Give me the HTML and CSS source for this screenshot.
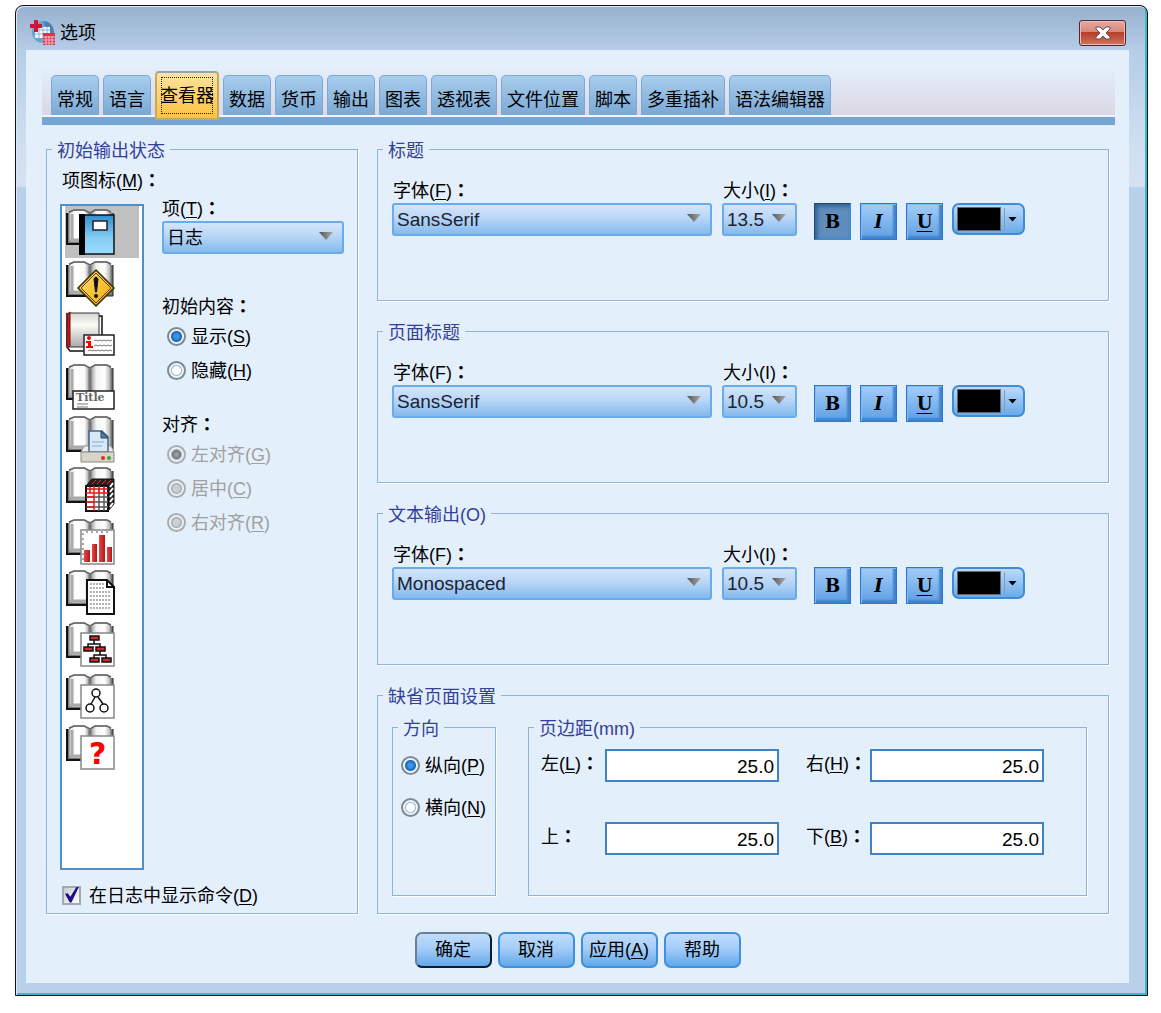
FILE: index.html
```html
<!DOCTYPE html>
<html lang="zh-CN">
<head>
<meta charset="UTF-8">
<title>选项</title>
<link rel="stylesheet" href="styles.css">
</head>
<body>
	<svg class="defs" aria-hidden="true">
		<defs>
			<linearGradient id="pageGrad">
				<stop offset="0" stop-color="#d8d8d8" />
				<stop offset="0.3" stop-color="#ffffff" />
				<stop offset="0.75" stop-color="#fafafa" />
				<stop offset="1" stop-color="#8c8c8c" />
			</linearGradient>
			<linearGradient id="pageGradRight">
				<stop offset="0" stop-color="#8c8c8c" />
				<stop offset="0.3" stop-color="#f4f4f4" />
				<stop offset="0.7" stop-color="#ffffff" />
				<stop offset="1" stop-color="#a8a8a8" />
			</linearGradient>
			<linearGradient id="blueGrad" x2="0" y2="1">
				<stop offset="0" stop-color="#2f8fd0" />
				<stop offset="0.6" stop-color="#86cdf4" />
				<stop offset="1" stop-color="#9adcff" />
			</linearGradient>
			<linearGradient id="signGrad" x2="1" y2="1">
				<stop offset="0" stop-color="#ffe07a" />
				<stop offset="1" stop-color="#eda800" />
			</linearGradient>
			<linearGradient id="coverGrad" x2="0" y2="1">
				<stop offset="0" stop-color="#d6d6d2" />
				<stop offset="0.35" stop-color="#fbfbf5" />
				<stop offset="1" stop-color="#a9a9a9" />
			</linearGradient>
			<linearGradient id="barGrad">
				<stop offset="0" stop-color="#e24a4a" />
				<stop offset="1" stop-color="#b81414" />
			</linearGradient>
			<symbol id="book" viewBox="0 0 50 52">
				<path d="M2 7V38H48V7" fill="#777" stroke="#222" stroke-width="1" />
				<path d="M2 7V38H22" fill="none" stroke="#111" stroke-width="2" />
				<path d="M4 7L9 4H20L25 7V36H4Z" fill="url(#pageGrad)" stroke="#777" />
				<path d="M25 7L30 4H42L46 7V36H25Z" fill="url(#pageGradRight)" stroke="#777" />
				<path d="M4 6L9 4H19L25 7L30 4H42L46 6" fill="none" stroke="#666" stroke-width="1.5" />
				<path d="M7 8V35M5 34H24" stroke="#aaa" stroke-width="3" />
				<path d="M25 8V35" stroke="#777" stroke-width="3" />
			</symbol>
		</defs>
	</svg>

	<div class="dialog">
		<header class="titleBar">
			<svg class="appIcon" viewBox="0 0 25 25" aria-hidden="true">
				<circle cx="13" cy="12" r="11" fill="#6ba2d2" />
				<path d="M13 1a11 11 0 0 1 9 17L17 10Z" fill="#4682bb" />
				<path d="M5 7H20V18H5Z" fill="#f3f8fd" />
				<path d="M5 10H20M5 14H20M9 7V18M13 7V18M17 7V18" stroke="#8db4d9" />
				<path d="M4 0H8V4H12V8H8V12H4V8H0V4H4Z" fill="#cf1735" />
				<path d="M13 13H25V25H13Z" fill="#d3364f" />
				<path d="M13 17H25M13 20H25M13 23H25M16 16V25M19 16V25M22 16V25" stroke="#f0b7c0" />
			</svg>
			<h1>选项</h1>
			<button type="button" class="closeButton" aria-label="关闭">
				<svg viewBox="0 0 18 14" aria-hidden="true">
					<path d="M2 1H6L9 4L12 1H16V3L12 7L16 11V13H12L9 10L6 13H2V11L6 7L2 3Z" fill="#fff" stroke="#6b4f58" />
				</svg>
			</button>
		</header>

		<main class="panel">
			<div class="tabs" role="tablist">
				<button type="button" role="tab">常规</button>
				<button type="button" role="tab">语言</button>
				<button type="button" role="tab" class="active" aria-selected="true">查看器</button>
				<button type="button" role="tab">数据</button>
				<button type="button" role="tab">货币</button>
				<button type="button" role="tab">输出</button>
				<button type="button" role="tab">图表</button>
				<button type="button" role="tab">透视表</button>
				<button type="button" role="tab">文件位置</button>
				<button type="button" role="tab">脚本</button>
				<button type="button" role="tab">多重插补</button>
				<button type="button" role="tab">语法编辑器</button>
			</div>

			<div class="columns">
				<fieldset class="initialState">
					<legend>初始输出状态</legend>
					<div class="stateGrid">
						<div class="iconColumn">
							<div class="listLabel" id="iconLabel">项图标(<u>M</u>)<span class="colon" lang="zh-TW">：</span></div>
							<ul class="iconList" role="listbox" aria-labelledby="iconLabel">
								<li class="selected" role="option" aria-selected="true" aria-label="日志">
									<svg viewBox="0 0 50 52">
										<use href="#book" />
										<path d="M15 9H49V48H15Z" fill="url(#blueGrad)" stroke="#111" stroke-width="1.5" />
										<path d="M14 8H20V49H14Z" fill="#000" />
										<path d="M28 15H42V24H28Z" fill="#fff" stroke="#222" stroke-width="1.5" />
									</svg>
								</li>
								<li role="option" aria-label="警告">
									<svg viewBox="0 0 50 52">
										<use href="#book" />
										<path d="M31 12L49 30L31 48L13 30Z" fill="url(#signGrad)" stroke="#332600" stroke-width="1.5" stroke-linejoin="round" />
										<path d="M31 15L46 30L31 45L16 30Z" fill="none" stroke="#5a4300" />
										<path d="M29 21Q31 17 33 21L31.5 34H30.5Z" fill="#111" stroke="#111" />
										<circle cx="31" cy="38" r="2" fill="#111" />
									</svg>
								</li>
								<li role="option" aria-label="附注">
									<svg viewBox="0 0 50 52">
										<path d="M5 7H37V42H5L2 38V5Z" fill="#fff" stroke="#111" stroke-width="1.5" />
										<path d="M4 4H34V38H4Z" fill="url(#coverGrad)" stroke="#333" />
										<path d="M2 5L5 3V37L2 39Z" fill="#c41818" stroke="#611" />
										<path d="M19 26H49V46H19Z" fill="#fff" stroke="#222" stroke-width="1.5" />
										<circle cx="24" cy="29" r="2" fill="#f00" />
										<path d="M21 32H26V37H28V39H21V37H23V34H21Z" fill="#f00" />
										<path d="M29 32l2-1 2 1 2-1 2 1 2-1 2 1 2-1 2 1 2-1M29 37l2-1 2 1 2-1 2 1 2-1 2 1 2-1 2 1 2-1M23 42l2-1 2 1 2-1 2 1 2-1 2 1 2-1 2 1 2-1 2 1 2-1 2 1" fill="none" stroke="#777" />
									</svg>
								</li>
								<li role="option" aria-label="标题">
									<svg viewBox="0 0 50 52">
										<use href="#book" />
										<path d="M8 30H49V48H8Z" fill="#fff" stroke="#222" stroke-width="1.5" />
										<text class="titleGlyph" x="11" y="40">Title</text>
										<path d="M12 43H23M12 46H23" stroke="#777" />
									</svg>
								</li>
								<li role="option" aria-label="打印">
									<svg viewBox="0 0 50 52">
										<use href="#book" />
										<path d="M19 33H46L49 39H16Z" fill="#eee" stroke="#999" />
										<path d="M24 18H37L43 24V39H24Z" fill="#d7e8f7" stroke="#45678b" stroke-width="1.5" />
										<path d="M36 18V25H43Z" fill="#4f7fac" stroke="#345" />
										<path d="M27 29H39M27 33H37" stroke="#88aacb" />
										<path d="M16 39H49V49H16Z" fill="#d8d4ca" stroke="#8d8983" />
										<circle cx="38" cy="45" r="2" fill="#e02b2b" />
										<circle cx="44" cy="45" r="2" fill="#39a637" />
									</svg>
								</li>
								<li role="option" aria-label="透视表">
									<svg viewBox="0 0 50 52">
										<use href="#book" />
										<path d="M21 22L27 15H49V40L43 47H21Z" fill="#222" stroke="#111" />
										<path d="M27 20L31 16M32 20L36 16M37 20L41 16M42 20L46 16" stroke="#f22" />
										<path d="M45 23L48 19M45 28L48 24M45 33L48 29M45 38L48 34M45 43L48 39" stroke="#fff" stroke-width="2" />
										<path d="M21 22H43V47H21Z" fill="#fff" stroke="#111" stroke-width="2" />
										<path d="M21 33H43M21 38H43M21 43H43M34 22V47M39 22V47" stroke="#555" stroke-width="1.5" />
										<path d="M21 29H43M29 22V47M34 23V29M39 23V29M22 25H43M22 33H29M22 38H29M22 43H29M25 23V29" stroke="#f01818" stroke-width="1.5" />
									</svg>
								</li>
								<li role="option" aria-label="图表">
									<svg viewBox="0 0 50 52">
										<use href="#book" />
										<path d="M16 14H49V48H16Z" fill="#fff" stroke="#888" stroke-width="1.5" />
										<path d="M17 18H19M17 23H19M17 28H19M17 33H19M17 38H19M17 43H19M22 15V17M27 15V17M32 15V17M37 15V17M42 15V17" stroke="#555" />
										<path d="M19 34H25V46H19Z" fill="url(#barGrad)" />
										<path d="M27 28H32V46H27Z" fill="url(#barGrad)" />
										<path d="M34 19H40V46H34Z" fill="url(#barGrad)" />
										<path d="M42 31H47V46H42Z" fill="url(#barGrad)" />
									</svg>
								</li>
								<li role="option" aria-label="文本输出">
									<svg viewBox="0 0 50 52">
										<use href="#book" />
										<path d="M22 13H42L49 20V47H22Z" fill="#fff" stroke="#111" stroke-width="2" />
										<path d="M42 13V20H49" fill="none" stroke="#111" stroke-width="2" />
										<path d="M25 17H39M25 21H39M25 25H46M25 29H46M25 33H46M25 37H46M25 41H46" stroke="#666" stroke-dasharray="2 1" />
									</svg>
								</li>
								<li role="option" aria-label="树模型">
									<svg viewBox="0 0 50 52">
										<use href="#book" />
										<path d="M16 14H49V47H16Z" fill="#fff" stroke="#888" stroke-width="1.5" />
										<path d="M29 21V25M23 28V25H35V32M29 39V36H41V39M35 32V36" fill="none" stroke="#111" stroke-width="1.5" />
										<path d="M25 17H34V21H25ZM19 28H28V32H19ZM31 28H40V32H31ZM25 39H34V43H25ZM37 39H46V43H37Z" fill="#c93030" stroke="#111" stroke-width="1.5" />
									</svg>
								</li>
								<li role="option" aria-label="模型">
									<svg viewBox="0 0 50 52">
										<use href="#book" />
										<path d="M16 14H49V47H16Z" fill="#fff" stroke="#888" stroke-width="1.5" />
										<path d="M30 26L26 33M33 26L38 33" stroke="#111" stroke-width="1.5" />
										<circle cx="31" cy="22" r="4" fill="#fff" stroke="#111" stroke-width="1.5" />
										<circle cx="25" cy="37" r="4" fill="#fff" stroke="#111" stroke-width="1.5" />
										<circle cx="39" cy="37" r="4" fill="#fff" stroke="#111" stroke-width="1.5" />
									</svg>
								</li>
								<li role="option" aria-label="未知">
									<svg viewBox="0 0 50 52">
										<use href="#book" />
										<path d="M16 14H49V47H16Z" fill="#fff" stroke="#888" stroke-width="1.5" />
										<text class="questionGlyph" x="24" y="42">?</text>
									</svg>
								</li>
							</ul>
						</div>
						<div class="itemColumn">
							<label for="item">项(<u>T</u>)<span class="colon" lang="zh-TW">：</span></label>
							<span class="selectBox"><select id="item"><option>日志</option></select></span>

							<div class="radioGroup" role="radiogroup" aria-labelledby="contentLabel">
								<div id="contentLabel">初始内容<span class="colon" lang="zh-TW">：</span></div>
								<label class="radioRow"><input type="radio" name="content" checked><span>显示(<u>S</u>)</span></label>
								<label class="radioRow"><input type="radio" name="content"><span>隐藏(<u>H</u>)</span></label>
							</div>
							<div class="radioGroup alignGroup" role="radiogroup" aria-labelledby="alignLabel">
								<div id="alignLabel">对齐<span class="colon" lang="zh-TW">：</span></div>
								<label class="radioRow disabled"><input type="radio" name="align" checked disabled><span>左对齐(<u>G</u>)</span></label>
								<label class="radioRow disabled"><input type="radio" name="align" disabled><span>居中(<u>C</u>)</span></label>
								<label class="radioRow disabled"><input type="radio" name="align" disabled><span>右对齐(<u>R</u>)</span></label>
							</div>
						</div>
					</div>
					<label class="checkRow"><input type="checkbox" checked><span>在日志中显示命令(<u>D</u>)</span></label>
				</fieldset>

				<div class="settings">
					<fieldset>
						<legend>标题</legend>
						<div class="fontRow">
							<div class="fontField">
								<label for="font1">字体(<u>F</u>)<span class="colon" lang="zh-TW">：</span></label>
								<span class="selectBox"><select id="font1"><option>SansSerif</option></select></span>
							</div>
							<div class="sizeField">
								<label for="size1">大小(<u>I</u>)<span class="colon" lang="zh-TW">：</span></label>
								<span class="selectBox"><select id="size1"><option>13.5</option></select></span>
							</div>
							<div class="styleButtons">
								<button type="button" class="pressed" aria-pressed="true">B</button>
								<button type="button" class="italic">I</button>
								<button type="button" class="underline">U</button>
								<button type="button" class="colorButton" aria-label="颜色"><span class="swatch"></span><span class="arrow"></span></button>
							</div>
						</div>
					</fieldset>

					<fieldset>
						<legend>页面标题</legend>
						<div class="fontRow">
							<div class="fontField">
								<label for="font2">字体(F)<span class="colon" lang="zh-TW">：</span></label>
								<span class="selectBox"><select id="font2"><option>SansSerif</option></select></span>
							</div>
							<div class="sizeField">
								<label for="size2">大小(I)<span class="colon" lang="zh-TW">：</span></label>
								<span class="selectBox"><select id="size2"><option>10.5</option></select></span>
							</div>
							<div class="styleButtons">
								<button type="button">B</button>
								<button type="button" class="italic">I</button>
								<button type="button" class="underline">U</button>
								<button type="button" class="colorButton" aria-label="颜色"><span class="swatch"></span><span class="arrow"></span></button>
							</div>
						</div>
					</fieldset>

					<fieldset>
						<legend>文本输出(O)</legend>
						<div class="fontRow">
							<div class="fontField">
								<label for="font3">字体(F)<span class="colon" lang="zh-TW">：</span></label>
								<span class="selectBox"><select id="font3"><option>Monospaced</option></select></span>
							</div>
							<div class="sizeField">
								<label for="size3">大小(I)<span class="colon" lang="zh-TW">：</span></label>
								<span class="selectBox"><select id="size3"><option>10.5</option></select></span>
							</div>
							<div class="styleButtons">
								<button type="button">B</button>
								<button type="button" class="italic">I</button>
								<button type="button" class="underline">U</button>
								<button type="button" class="colorButton" aria-label="颜色"><span class="swatch"></span><span class="arrow"></span></button>
							</div>
						</div>
					</fieldset>

					<fieldset>
						<legend>缺省页面设置</legend>
						<div class="pageSetup">
							<fieldset class="orientation">
								<legend>方向</legend>
								<label class="radioRow"><input type="radio" name="orient" checked><span>纵向(<u>P</u>)</span></label>
								<label class="radioRow"><input type="radio" name="orient"><span>横向(<u>N</u>)</span></label>
							</fieldset>
							<fieldset class="margins">
								<legend>页边距(mm)</legend>
								<div class="marginGrid">
									<div class="marginField">
										<label for="left">左(<u>L</u>)<span class="colon" lang="zh-TW">：</span></label>
										<input type="text" id="left" value="25.0">
									</div>
									<div class="marginField">
										<label for="right">右(<u>H</u>)<span class="colon" lang="zh-TW">：</span></label>
										<input type="text" id="right" value="25.0">
									</div>
									<div class="marginField">
										<label for="top">上<span class="colon" lang="zh-TW">：</span></label>
										<input type="text" id="top" value="25.0">
									</div>
									<div class="marginField">
										<label for="bottom">下(<u>B</u>)<span class="colon" lang="zh-TW">：</span></label>
										<input type="text" id="bottom" value="25.0">
									</div>
								</div>
							</fieldset>
						</div>
					</fieldset>
				</div>
			</div>

			<div class="actions">
				<button type="button" class="default">确定</button>
				<button type="button">取消</button>
				<button type="button">应用(<u>A</u>)</button>
				<button type="button">帮助</button>
			</div>
		</main>
	</div>
</body>
</html>
```
FILE: styles.css
```css
* {
	box-sizing: border-box;
}

body {
	margin: 0;
	padding: 5px 13px 17px 15px;
	background: #fff;
	color: #000;
	font-family: "Liberation Sans", "Noto Sans CJK SC", sans-serif;
	font-size: 18px;
	line-height: 24px;
}

button, select, input {
	font: inherit;
	color: inherit;
	margin: 0;
}

u {
	text-decoration-thickness: 1px;
	text-underline-offset: 2px;
}

.defs {
	position: absolute;
	width: 0;
	height: 0;
}

.colon {
	font-family: "Noto Sans CJK TC", sans-serif;
	font-weight: bold;
	line-height: 1;
}

/* window frame */
.dialog {
	border: 1px solid #111;
	border-radius: 8px 8px 0 0;
	padding: 0 18px 12px 10px;
	background: linear-gradient(#97b0cd, #b5cde7 44px, #cfdff1 140px, #d4e2f2 180px, #b9d0ea 182px);
	box-shadow: inset 1px 1px #dce9f5, inset -2px -2px #3fb5cc;
}

.titleBar {
	display: flex;
	align-items: center;
	height: 44px;
	padding: 9px 3px 0 4px;
	gap: 5px;
}

.titleBar h1 {
	flex: 1;
	margin: 0;
	font-size: 18px;
	font-weight: normal;
}

.appIcon {
	width: 25px;
	height: 25px;
}

.closeButton {
	display: flex;
	align-items: center;
	justify-content: center;
	width: 47px;
	height: 26px;
	padding: 0;
	border: 1px solid #4d2738;
	border-radius: 3px;
	background: linear-gradient(#e7aaa2, #d98579 46%, #b83c28 48%, #cf7660);
	box-shadow: inset 0 0 0 1px #eebcb4;
}

.closeButton svg {
	width: 18px;
	height: 14px;
}

.panel {
	padding: 18px 0 15px;
	background: #e3effb;
}

/* tabs */
.tabs {
	display: flex;
	align-items: flex-end;
	gap: 4px;
	height: 57px;
	margin: 0 14px 0 16px;
	padding: 0 9px 2px;
	border-bottom: 8px solid #76a5d3;
	background: linear-gradient(#e3effb, #dbd7e4 47px, #f0f6fd 47px);
}

.tabs button {
	height: 40px;
	padding: 8px 5px 0;
	border: 1px solid #7ba9d6;
	border-bottom: 0;
	border-radius: 5px 5px 0 0;
	background: linear-gradient(#a9cdec, #7aa9d6);
	white-space: nowrap;
}

.tabs .active {
	height: 49px;
	margin-bottom: -5px;
	padding: 0 3px;
	border: 2px solid #c9a85a;
	border-top-color: #8fa8b0;
	border-radius: 4px 4px 0 0;
	background: linear-gradient(#fbe3a2, #ffc23f);
	outline: 1px dotted #222;
	outline-offset: -7px;
}

/* groups */
fieldset {
	min-width: 0;
	margin: 0;
	padding: 0;
	border: 1px solid #8fb4da;
	box-shadow: 1px 1px #fff;
}

legend {
	margin-left: 5px;
	padding: 4px 5px 0;
	line-height: 20px;
	color: #333f99;
}

.columns {
	display: grid;
	grid-template-columns: 312px minmax(0, 1fr);
	gap: 19px;
	margin: 12px 20px 18px;
}

.stateGrid {
	display: grid;
	grid-template-columns: 84px minmax(0, 1fr);
	gap: 18px;
	padding: 8px 13px 0;
}

.listLabel {
	margin-bottom: 11px;
	padding-left: 2px;
	white-space: nowrap;
}

.iconList {
	display: grid;
	grid-auto-rows: minmax(0, 1fr);
	height: 666px;
	margin: 0;
	padding: 0 3px 94px;
	border: 2px solid #4f8fcb;
	background: #fff;
	list-style: none;
}

.iconList .selected {
	background: #c0c0c0;
}

.iconList svg {
	display: block;
	width: 50px;
	height: 52px;
}

.titleGlyph {
	font-family: "DejaVu Serif", serif;
	font-size: 11px;
	font-weight: bold;
	fill: #666;
}

.questionGlyph {
	font-family: "DejaVu Sans", sans-serif;
	font-size: 30px;
	font-weight: bold;
	fill: #f00;
}

.itemColumn {
	padding-top: 28px;
}

.itemColumn label {
	display: block;
}

/* drop-downs */
.selectBox {
	display: block;
	position: relative;
}

.selectBox select {
	display: block;
	width: 100%;
	height: 33px;
	padding: 0 3px;
	border: 2px solid #6aabeb;
	border-radius: 3px;
	background: linear-gradient(#d3e5fb, #b9d6f6 45%, #84baed);
	appearance: none;
	font-size: 19px;
	color: #1c2230;
}

.selectBox #item {
	font-size: 18px;
	color: #000;
}

.selectBox::after {
	content: "";
	position: absolute;
	top: 11px;
	right: 11px;
	width: 14px;
	height: 8px;
	background: linear-gradient(90deg, #555, #aaa);
	clip-path: polygon(0 0, 100% 0, 50% 100%);
	pointer-events: none;
}

/* radios and check box */
.radioGroup {
	margin-top: 41px;
}

.alignGroup {
	margin-top: 26px;
}

.radioRow, .itemColumn .radioRow {
	display: flex;
	align-items: center;
	gap: 5px;
	height: 34px;
	padding-left: 5px;
	white-space: nowrap;
}

.radioRow span, .checkRow span {
	padding-top: 2px;
}

input[type="radio"] {
	flex: none;
	width: 19px;
	height: 19px;
	border: 2px solid #7d8b90;
	border-radius: 50%;
	background: radial-gradient(circle, #fff 4px, #9bb9d6 5px, #eef4fa 6px);
	appearance: none;
}

input[type="radio"]:checked {
	background: radial-gradient(circle, #3d95e0 2px, #1565bb 5px, #eef4fa 6px);
}

input[type="radio"]:disabled {
	border-color: #a9adb0;
	background: radial-gradient(circle, #ccd0d4 3px, #a9adb2 5px, #edf1f5 6px);
}

input[type="radio"]:disabled:checked {
	background: radial-gradient(circle, #999ea3 1px, #73787d 4px, #edf1f5 6px);
}

.disabled {
	color: #a0a0a0;
}

.checkRow {
	display: flex;
	align-items: center;
	gap: 8px;
	padding: 12px 0 5px 15px;
}

input[type="checkbox"] {
	position: relative;
	width: 19px;
	height: 19px;
	border: 2px solid #a3a9af;
	background: linear-gradient(135deg, #c8cbd0, #fff);
	appearance: none;
}

input[type="checkbox"]:checked::after {
	content: "";
	position: absolute;
	inset: -1px 0 0 1px;
	background: #1a1188;
	clip-path: polygon(0 45%, 20% 42%, 38% 64%, 84% 0, 100% 0, 46% 100%, 34% 100%);
}

/* font settings */
.settings {
	display: flex;
	flex-direction: column;
	gap: 18px;
}

.fontRow {
	display: flex;
	align-items: flex-end;
	padding: 18px 14px 60px;
}

.fontField {
	flex: 0 1 320px;
	margin-right: 10px;
}

.sizeField {
	flex: 0 0 75px;
	margin-right: 17px;
}

.fontField label, .sizeField label {
	display: block;
	padding-left: 1px;
	white-space: nowrap;
}

.fontField, .sizeField {
	padding-bottom: 4px;
}

.styleButtons {
	display: flex;
	align-items: flex-start;
	gap: 9px;
}

.styleButtons button {
	width: 37px;
	height: 37px;
	padding: 0;
	border: 1px solid #2878d4;
	background: linear-gradient(#a3cdf9, #5f9fe2);
	box-shadow: inset 1px 1px #83b9f2, inset -3px -3px 2px #4383cb;
	font-family: "DejaVu Serif", serif;
	font-size: 18px;
	font-weight: bold;
}

.styleButtons .pressed {
	border-color: #1b4a83 #2b93e5 #2b93e5 #1b4a83;
	background: #5f8dbd;
	box-shadow: inset 2px 2px 4px #2c578c;
}

.styleButtons .italic {
	font-style: italic;
}

.styleButtons .underline {
	text-decoration: underline;
	text-decoration-thickness: 1px;
	text-underline-offset: 3px;
}

.styleButtons .colorButton {
	display: flex;
	align-items: center;
	width: 73px;
	height: 32px;
	padding: 0 3px;
	border: 2px solid #3f8bd6;
	border-radius: 7px;
	background: linear-gradient(#bcdafb, #69abea);
	box-shadow: none;
}

.swatch {
	width: 44px;
	height: 24px;
	border: 1px solid #666;
	background: #000;
}

.arrow {
	display: flex;
	align-items: center;
	justify-content: center;
	width: 16px;
	height: 22px;
	margin-left: 3px;
	border-left: 1px solid #8b9aa9;
}

.arrow::after {
	content: "";
	width: 9px;
	height: 5px;
	background: #000;
	clip-path: polygon(0 0, 100% 0, 50% 100%);
}

/* page setup */
.pageSetup {
	display: flex;
	gap: 32px;
	padding: 8px 21px 17px 14px;
}

.orientation {
	flex: 0 0 104px;
}

.orientation .radioRow {
	height: 42px;
	padding-left: 8px;
}

.orientation legend + .radioRow {
	margin-top: 5px;
}

.margins {
	flex: 1;
}

.marginGrid {
	display: grid;
	grid-template-columns: repeat(2, minmax(0, 238px));
	gap: 40px 27px;
	padding: 10px 12px 40px;
}

.marginField {
	display: flex;
}

.marginField label {
	flex: 0 0 64px;
	padding-top: 3px;
	white-space: nowrap;
}

.marginField input {
	flex: 1;
	min-width: 0;
	height: 33px;
	padding: 2px 3px 0;
	border: 2px solid #3f83c6;
	background: #fff;
	font-size: 19px;
	text-align: right;
}

/* bottom buttons */
.actions {
	display: flex;
	justify-content: center;
	gap: 6px;
}

.actions button {
	width: 77px;
	height: 36px;
	padding: 0;
	border: 2px solid #3f90dc;
	border-radius: 7px;
	background: linear-gradient(#c0dcfb, #a5cdf8 45%, #62a8ea);
}

.actions .default {
	border-color: #6e7f93 #101c2c #101c2c #6e7f93;
}
```
